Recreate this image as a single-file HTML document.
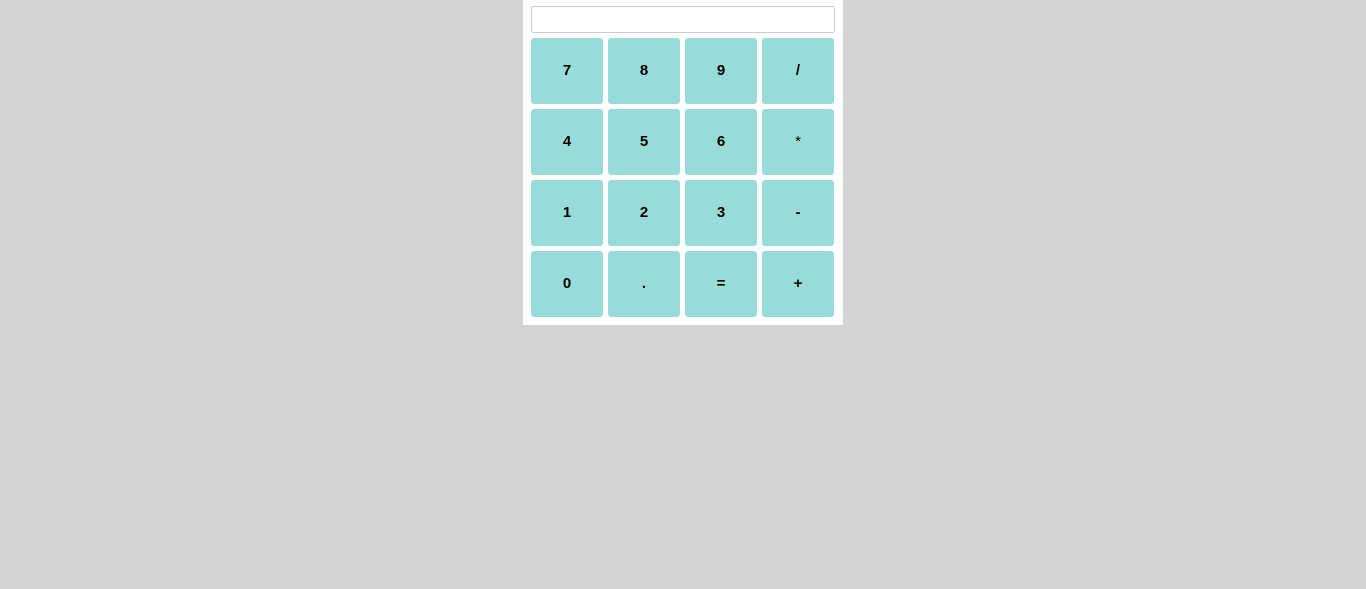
<!DOCTYPE html>
<html><head><style>
body{margin:0;background:#d3d3d3;width:1366px;height:589px;position:relative;font-family:"Liberation Sans",Arial,sans-serif}
.c{position:absolute;left:523px;top:0;width:320px;height:325px;background:#fff}
.in{position:absolute;left:8px;top:6px;width:302px;height:25px;border:1px solid #ccc;border-radius:2px;box-sizing:content-box}
.b{position:absolute;width:72px;height:66px;background:#97dcd8;border-radius:3px;display:flex;align-items:center;justify-content:center;font-weight:bold;font-size:15px;color:#000;padding-bottom:2px;box-sizing:border-box}
</style></head><body><div class="c"><div class="in"></div>
<div class="b" style="left:8px;top:38px">7</div><div class="b" style="left:85px;top:38px">8</div><div class="b" style="left:162px;top:38px">9</div><div class="b" style="left:239px;top:38px">/</div>
<div class="b" style="left:8px;top:109px">4</div><div class="b" style="left:85px;top:109px">5</div><div class="b" style="left:162px;top:109px">6</div><div class="b" style="left:239px;top:109px;font-weight:normal">*</div>
<div class="b" style="left:8px;top:180px">1</div><div class="b" style="left:85px;top:180px">2</div><div class="b" style="left:162px;top:180px">3</div><div class="b" style="left:239px;top:180px">-</div>
<div class="b" style="left:8px;top:251px">0</div><div class="b" style="left:85px;top:251px">.</div><div class="b" style="left:162px;top:251px">=</div><div class="b" style="left:239px;top:251px">+</div>
</div></body></html>
